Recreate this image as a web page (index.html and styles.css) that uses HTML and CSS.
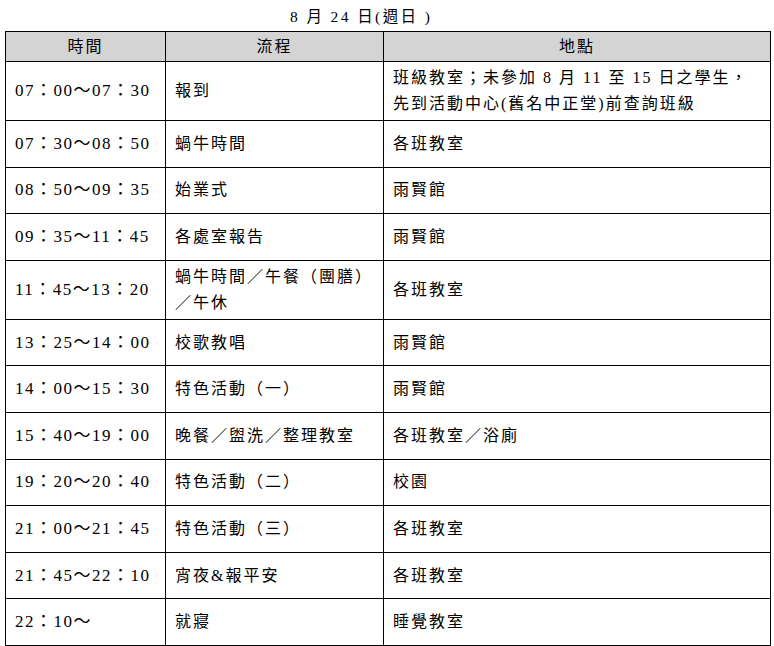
FILE: index.html
```html
<!DOCTYPE html>
<html lang="zh-Hant">
<head>
<meta charset="utf-8">
<title>8 月 24 日(週日)</title>
<link rel="stylesheet" href="styles.css">
</head>
<body>
<div class="page">
  <div class="title">8 月 24 日(週日 )</div>
  <table class="sched">
    <colgroup>
      <col class="c-time">
      <col class="c-flow">
      <col class="c-place">
    </colgroup>
    <thead>
      <tr class="head"><th>時間</th><th>流程</th><th>地點</th></tr>
    </thead>
    <tbody>
      <tr class="tall"><td class="t">07：00～07：30</td><td>報到</td><td>班級教室；未參加 8 月 11 至 15 日之學生，<br>先到活動中心(舊名中正堂)前查詢班級</td></tr>
      <tr class="row"><td class="t">07：30～08：50</td><td>蝸牛時間</td><td>各班教室</td></tr>
      <tr class="row"><td class="t">08：50～09：35</td><td>始業式</td><td>雨賢館</td></tr>
      <tr class="row"><td class="t">09：35～11：45</td><td>各處室報告</td><td>雨賢館</td></tr>
      <tr class="tall"><td class="t">11：45～13：20</td><td>蝸牛時間／午餐（團膳）<br>／午休</td><td>各班教室</td></tr>
      <tr class="row"><td class="t">13：25～14：00</td><td>校歌教唱</td><td>雨賢館</td></tr>
      <tr class="row"><td class="t">14：00～15：30</td><td>特色活動（一）</td><td>雨賢館</td></tr>
      <tr class="row"><td class="t">15：40～19：00</td><td>晚餐／盥洗／整理教室</td><td>各班教室／浴廁</td></tr>
      <tr class="row"><td class="t">19：20～20：40</td><td>特色活動（二）</td><td>校園</td></tr>
      <tr class="row"><td class="t">21：00～21：45</td><td>特色活動（三）</td><td>各班教室</td></tr>
      <tr class="row"><td class="t">21：45～22：10</td><td>宵夜&amp;報平安</td><td>各班教室</td></tr>
      <tr class="row"><td class="t">22：10～</td><td>就寢</td><td>睡覺教室</td></tr>
    </tbody>
  </table>
</div>
</body>
</html>
```

FILE: styles.css
```css
html, body {
  margin: 0;
  padding: 0;
  background: #fff;
}

.page {
  padding: 0 0 0 5px;
  color: #000;
  font-family: "Liberation Serif", "Noto Sans CJK TC", serif;
}

.title {
  height: 31px;
  box-sizing: border-box;
  padding: 7px 0 0 285px;
  font-size: 15.5px;
  line-height: 20px;
  letter-spacing: 2.4px;
  white-space: pre;
}

.sched {
  border-collapse: collapse;
  table-layout: fixed;
  width: 765px;
  font-size: 16px;
  letter-spacing: 2px;
}

.c-time { width: 160px; }
.c-flow { width: 218px; }
.c-place { width: 387px; }

.sched th,
.sched td {
  border: 1px solid #000;
  padding: 0 0 0 9px;
  vertical-align: middle;
  line-height: 26px;
  text-align: left;
  font-weight: normal;
  white-space: nowrap;
}

.sched th {
  background: #d4d4d4;
  text-align: center;
  padding: 0;
  line-height: 22px;
}

.head { height: 30px; }
.tall { height: 59px; }
.row { height: 46.6px; }

.sched td.t {
  font-size: 17px;
  letter-spacing: 1.5px;
}
```
